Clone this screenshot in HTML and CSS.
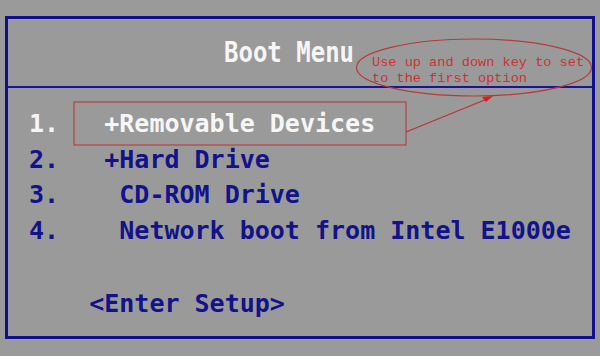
FILE: index.html
```html
<!DOCTYPE html>
<html lang="en">
<head>
    <meta charset="UTF-8">
    <title>Boot Menu</title>
    <link rel="stylesheet" href="styles.css">
</head>
<body>

    <div class="screen">
        <div class="bios">
            <div class="bios-header">
                <span class="title">Boot Menu</span>
            </div>
            <div class="menu">
                <div class="item selected">1.   +Removable Devices</div>
                <div class="item">2.   +Hard Drive</div>
                <div class="item">3.    CD-ROM Drive</div>
                <div class="item">4.    Network boot from Intel E1000e</div>
                <div class="item setup">    &lt;Enter Setup&gt;</div>
            </div>
        </div>

        <!-- annotation drawn over the screenshot -->
        <svg class="marks" width="600" height="356" viewBox="0 0 600 356">
            <rect x="74" y="102" width="332" height="43" fill="none" stroke="#b54848" stroke-width="1.3"/>
            <ellipse cx="474" cy="67.5" rx="117.5" ry="28.5" fill="none" stroke="#b53a3a" stroke-width="1.2"/>
            <line x1="406" y1="132" x2="487" y2="99" stroke="#c03030" stroke-width="1.3"/>
            <polygon points="493,96 482,97 486,102" fill="#e01818"/>
        </svg>
        <div class="note">Use up and down key to set<br>to the first option</div>
    </div>

</body>
</html>
```

FILE: styles.css
```css
body {
    margin: 0;
    background: #9a9a9a;
    font-family: "DejaVu Sans Mono", monospace;
}

.screen {
    position: relative;
    width: 600px;
    height: 356px;
    padding-top: 16px;
    box-sizing: border-box;
}

.bios {
    margin-left: 5px;
    width: 590px;
    height: 323px;
    box-sizing: border-box;
    border: 3px solid #10108e;
}

.bios-header {
    height: 69px;
    border-bottom: 2px solid #1515a0;
    padding-left: 216px;
    box-sizing: border-box;
    padding-top: 18px;
}

.title {
    display: inline-block;
    color: #f6f6f6;
    font-size: 24px;
    font-weight: bold;
    line-height: 35px;
    transform: scaleY(1.15);
    transform-origin: 50% 80%;
}

/* Menu entries */
.menu {
    padding: 18px 0 0 21px;
}

.item {
    white-space: pre;
    font-size: 25px;
    font-weight: bold;
    line-height: 35.5px;
    color: #12128a;
}

.item.selected {
    color: #f6f6f6;
}

.item.setup {
    margin-top: 38px;
}

/* Callout */
.marks {
    position: absolute;
    left: 0;
    top: 0;
}

.note {
    position: absolute;
    left: 372px;
    top: 55px;
    font-family: "Liberation Mono", monospace;
    font-size: 13.6px;
    line-height: 15.5px;
    color: #d03030;
}
```
